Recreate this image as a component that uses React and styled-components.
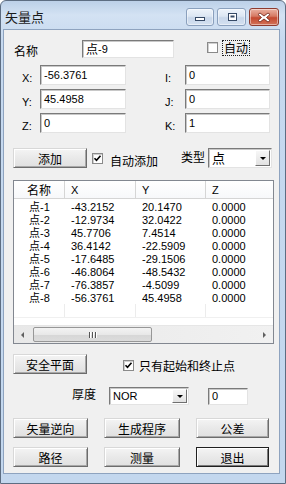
import React from 'react';
import styled, { createGlobalStyle } from 'styled-components';

const cjk = `"Noto Sans CJK SC", "Noto Sans", sans-serif`;
const latin = `"Liberation Sans", "Noto Sans CJK SC", sans-serif`;

const GlobalStyle = createGlobalStyle`
  html, body {
    margin: 0;
    padding: 0;
    background: #ffffff;
  }
  body {
    width: 286px;
    height: 484px;
    overflow: hidden;
  }
`;

const Window = styled.div`
  box-sizing: border-box;
  width: 286px;
  height: 484px;
  border: 1px solid #5d6d82;
  border-radius: 6px 6px 0 0;
  background: linear-gradient(#bcd0e8, #d3e2f3 14px, #c6d9ef 40px, #c3d7ee);
  padding: 0 5px 9px 2px;
  display: flex;
  flex-direction: column;
  font-family: ${cjk};
  font-size: 12px;
  color: #000;
`;

const TitleBar = styled.div`
  height: 28px;
  display: flex;
  align-items: flex-start;
`;

const Title = styled.span`
  margin: 8px 0 0 2px;
  font-size: 13px;
  line-height: 16px;
  color: #1b1b1b;
`;

const Captions = styled.div`
  margin: 7px 1px 0 auto;
  display: flex;
  gap: 3px;
`;

const CaptionButton = styled.div`
  box-sizing: border-box;
  width: ${(p) => p.$w}px;
  height: 18px;
  border: 1px solid ${(p) => (p.$close ? '#8e3b2f' : '#8aa0bd')};
  border-radius: 3px;
  background: ${(p) =>
    p.$close
      ? 'linear-gradient(#eab1a2, #d67a63 45%, #c4492f 55%, #d2735a)'
      : 'linear-gradient(#eef4fb, #dce7f3 45%, #c8d7ea 55%, #d4e1f1)'};
  box-shadow: inset 0 0 0 1px rgba(255, 255, 255, 0.45);
  display: flex;
  align-items: center;
  justify-content: center;
`;

const Client = styled.div`
  flex: 1;
  background: #f0f0f0;
  border: 1px solid #8ea3bf;
  display: flex;
  flex-direction: column;
`;

const Row = styled.div`
  display: flex;
  align-items: center;
  height: ${(p) => p.$h}px;
  margin-top: ${(p) => p.$mt}px;
  padding-left: ${(p) => p.$pl}px;
`;

const Label = styled.span`
  width: ${(p) => p.$w}px;
  margin-left: ${(p) => p.$ml || 0}px;
  align-self: ${(p) => (p.$low ? 'flex-end' : 'center')};
  line-height: 14px;
  margin-top: ${(p) => p.$mt || 0}px;
  font-family: ${(p) => (p.$latin ? latin : cjk)};
  font-size: ${(p) => (p.$latin ? 11 : 12)}px;
  white-space: nowrap;
`;

const Field = styled.div`
  box-sizing: border-box;
  width: ${(p) => p.$w}px;
  height: ${(p) => p.$h}px;
  margin-left: ${(p) => p.$ml || 0}px;
  background: #ffffff;
  border: 1px solid;
  border-color: #7a7a7a #e3e3e3 #e3e3e3 #7a7a7a;
  box-shadow: inset 1px 1px 0 #c8c8c8;
  padding-left: 3px;
  display: flex;
  align-items: center;
  font-family: ${latin};
  font-size: 11px;
  line-height: 13px;
  white-space: nowrap;
`;

const Han = styled.span`
  font-family: ${cjk};
  font-size: 12px;
  line-height: 1;
`;

const Select = styled(Field)`
  padding-left: 3px;
  padding-right: 1px;
  justify-content: space-between;
  font-size: ${(p) => (p.$cjk ? 13 : 11)}px;
`;

const DropButton = styled.div`
  box-sizing: border-box;
  width: 15px;
  height: calc(100% - 2px);
  background: linear-gradient(#f7f7f7, #e2e2e2);
  border: 1px solid;
  border-color: #ffffff #6f6f6f #6f6f6f #ffffff;
  display: flex;
  align-items: center;
  justify-content: center;
`;

const Arrow = styled.span`
  width: 0;
  height: 0;
  border-left: 3px solid transparent;
  border-right: 3px solid transparent;
  border-top: 3px solid #000;
`;

const CheckBox = styled.span`
  box-sizing: border-box;
  width: 11px;
  height: 11px;
  margin-left: ${(p) => p.$ml || 0}px;
  margin-top: ${(p) => p.$mt || 0}px;
  background: #ffffff;
  border: 1px solid #8a8a8a;
  box-shadow: inset 1px 1px 0 #d0d0d0;
  display: flex;
  align-items: center;
  justify-content: center;
  flex-shrink: 0;
`;

const CheckText = styled.span`
  margin-left: ${(p) => p.$ml}px;
  margin-top: ${(p) => p.$mt || 0}px;
  line-height: 14px;
  outline: ${(p) => (p.$focus ? '1px dotted #202020' : 'none')};
  padding: 0 1px;
  white-space: nowrap;
`;

const Button = styled.div`
  box-sizing: border-box;
  width: ${(p) => p.$w}px;
  height: 20px;
  margin-left: ${(p) => p.$ml || 0}px;
  background: linear-gradient(#f4f4f4, #e9e9e9 50%, #e0e0e0);
  border: 1px solid;
  border-color: ${(p) =>
    p.$default ? '#202020' : '#d8d8d8 #6c6c6c #6c6c6c #d8d8d8'};
  box-shadow: ${(p) =>
    p.$default
      ? 'inset 1px 1px 0 #ffffff, inset -1px -1px 0 #7a7a7a'
      : 'inset 1px 1px 0 #ffffff, inset -1px -1px 0 #a8a8a8'};
  display: flex;
  align-items: center;
  justify-content: center;
  font-size: 12px;
  white-space: nowrap;
`;

const List = styled.div`
  box-sizing: border-box;
  width: 261px;
  height: 164px;
  margin: 12px 0 0 9px;
  border: 1px solid #828790;
  background: #ffffff;
  display: flex;
  flex-direction: column;
  overflow: hidden;
`;

const Header = styled.div`
  box-sizing: border-box;
  height: 18px;
  display: flex;
  border-bottom: 1px solid #d5d5d5;
  background: linear-gradient(#ffffff, #f7f8fa);
  flex-shrink: 0;
`;

const HeadCell = styled.div`
  box-sizing: border-box;
  width: ${(p) => p.$w}px;
  flex-shrink: 0;
  border-right: 1px solid #d5d5d5;
  display: flex;
  align-items: center;
  justify-content: ${(p) => (p.$center ? 'center' : 'flex-start')};
  padding-left: ${(p) => (p.$center ? 0 : 6)}px;
  font-family: ${(p) => (p.$center ? cjk : latin)};
  font-size: ${(p) => (p.$center ? 12 : 11)}px;
`;

const Body = styled.div`
  padding-top: 1px;
  display: flex;
  flex-direction: column;
`;

const DataRow = styled.div`
  height: 13px;
  display: flex;
  flex-shrink: 0;
`;

const Cell = styled.div`
  width: ${(p) => p.$w}px;
  height: 13px;
  flex-shrink: 0;
  display: flex;
  align-items: center;
  justify-content: ${(p) => (p.$center ? 'center' : 'flex-start')};
  padding-left: ${(p) => (p.$center ? 0 : 6)}px;
  box-sizing: border-box;
  font-family: ${latin};
  font-size: 11px;
  line-height: 12px;
  white-space: nowrap;
`;

const Filler = styled.div`
  flex: 1;
  display: flex;
  flex-direction: column;
`;

const EmptyRow = styled.div`
  height: 13px;
  display: flex;
  flex-shrink: 0;
  border-bottom: 1px solid #f0f0f0;
`;

const FillCell = styled.div`
  box-sizing: border-box;
  width: ${(p) => p.$w}px;
  flex-shrink: 0;
  border-right: 1px solid #ececec;
`;

const ScrollBar = styled.div`
  height: 17px;
  display: flex;
  align-items: center;
  background: linear-gradient(90deg, #e8e8e8, #f1f1f1);
  border-top: 1px solid #e6e6e6;
  flex-shrink: 0;
`;

const ScrollArrow = styled.div`
  width: 17px;
  height: 17px;
  display: flex;
  align-items: center;
  justify-content: center;
  margin-left: ${(p) => (p.$right ? 'auto' : 0)};
`;

const Triangle = styled.span`
  width: 0;
  height: 0;
  border-top: 3px solid transparent;
  border-bottom: 3px solid transparent;
  ${(p) => (p.$right ? 'border-left: 3px solid #606060;' : 'border-right: 3px solid #606060;')}
`;

const Thumb = styled.div`
  box-sizing: border-box;
  width: 119px;
  height: 15px;
  margin-left: 2px;
  border: 1px solid #979797;
  border-radius: 2px;
  background: linear-gradient(#f3f3f3, #e8e8e8 50%, #d6d6d6 51%, #dcdcdc);
  display: flex;
  align-items: center;
  justify-content: center;
  gap: 2px;
`;

const Grip = styled.span`
  width: 1px;
  height: 6px;
  background: #555;
  box-shadow: 1px 0 0 #ffffff;
`;

const Check = () => (
  <svg width="9" height="9" viewBox="0 0 9 9">
    <path d="M1.5 4.2 L3.5 6.3 L7.5 1.8" fill="none" stroke="#000" strokeWidth="1.6" />
  </svg>
);

const columns = [51, 71, 70, 70];

const points = [
  ['点-1', '-43.2152', '20.1470', '0.0000'],
  ['点-2', '-12.9734', '32.0422', '0.0000'],
  ['点-3', '45.7706', '7.4514', '0.0000'],
  ['点-4', '36.4142', '-22.5909', '0.0000'],
  ['点-5', '-17.6485', '-29.1506', '0.0000'],
  ['点-6', '-46.8064', '-48.5432', '0.0000'],
  ['点-7', '-76.3857', '-4.5099', '0.0000'],
  ['点-8', '-56.3761', '45.4958', '0.0000'],
];

const coords = [
  ['X:', '-56.3761', 'I:', '0'],
  ['Y:', '45.4958', 'J:', '0'],
  ['Z:', '0', 'K:', '1'],
];

const App = () => {
  return (
    <>
      <GlobalStyle />
      <Window>
        <TitleBar>
          <Title>矢量点</Title>
          <Captions>
            <CaptionButton $w={28}>
              <svg width="12" height="10" viewBox="0 0 12 10">
                <rect x="1.5" y="5.5" width="9" height="3" fill="#fff" stroke="#364a66" />
              </svg>
            </CaptionButton>
            <CaptionButton $w={29}>
              <svg width="12" height="10" viewBox="0 0 12 10">
                <rect x="2.5" y="1.5" width="8" height="7" fill="#fff" stroke="#364a66" />
                <rect x="4.5" y="3.5" width="4" height="2" fill="#364a66" />
              </svg>
            </CaptionButton>
            <CaptionButton $w={30} $close>
              <svg width="14" height="11" viewBox="0 0 14 11">
                <path
                  d="M3 1 L7 4 L11 1 L13 2.5 L9.5 5.5 L13 8.5 L11 10 L7 7 L3 10 L1 8.5 L4.5 5.5 L1 2.5 Z"
                  fill="#fff"
                  stroke="#6b1f14"
                  strokeWidth="0.8"
                />
              </svg>
            </CaptionButton>
          </Captions>
        </TitleBar>

        <Client>
          <Row $h={18} $mt={10} $pl={10}>
            <Label $w={68} $low>名称</Label>
            <Field $w={92} $h={18}><Han>点</Han>-9</Field>
            <CheckBox $ml={33} $mt={-3} />
            <CheckText $ml={5} $mt={-2} $focus>自动</CheckText>
          </Row>

          {coords.map(([a, av, b, bv], i) => (
            <Row key={a} $h={20} $mt={i === 0 ? 7 : 4} $pl={18}>
              <Label $w={18} $low $latin>{a}</Label>
              <Field $w={86} $h={20}>{av}</Field>
              <Label $w={20} $ml={39} $low $latin>{b}</Label>
              <Field $w={85} $h={20}>{bv}</Field>
            </Row>
          ))}

          <Row $h={20} $mt={15} $pl={9}>
            <Button $w={74}>添加</Button>
            <CheckBox $ml={5}>
              <Check />
            </CheckBox>
            <CheckText $ml={6} $mt={5}>自动添加</CheckText>
            <Label $w={26} $ml={22} $mt={-2}>类型</Label>
            <Select $w={64} $h={20} $ml={1} $cjk>
              点
              <DropButton>
                <Arrow />
              </DropButton>
            </Select>
          </Row>

          <List>
            <Header>
              <HeadCell $w={columns[0]} $center>名称</HeadCell>
              <HeadCell $w={columns[1]}>X</HeadCell>
              <HeadCell $w={columns[2]}>Y</HeadCell>
              <HeadCell $w={columns[3]}>Z</HeadCell>
            </Header>
            <Body>
              {points.map((p) => (
                <DataRow key={p[0]}>
                  <Cell $w={columns[0]} $center>{p[0]}</Cell>
                  <Cell $w={columns[1]}>{p[1]}</Cell>
                  <Cell $w={columns[2]}>{p[2]}</Cell>
                  <Cell $w={columns[3]}>{p[3]}</Cell>
                </DataRow>
              ))}
            </Body>
            <Filler>
              <EmptyRow>
                {columns.map((w, i) => (
                  <FillCell key={i} $w={w} />
                ))}
              </EmptyRow>
            </Filler>
            <ScrollBar>
              <ScrollArrow>
                <Triangle />
              </ScrollArrow>
              <Thumb>
                <Grip />
                <Grip />
                <Grip />
              </Thumb>
              <ScrollArrow $right>
                <Triangle $right />
              </ScrollArrow>
            </ScrollBar>
          </List>

          <Row $h={20} $mt={10} $pl={9}>
            <Button $w={74}>安全平面</Button>
            <CheckBox $ml={36} $mt={3}>
              <Check />
            </CheckBox>
            <CheckText $ml={4} $mt={4}>只有起始和终止点</CheckText>
          </Row>

          <Row $h={18} $mt={13} $pl={68}>
            <Label $w={24} $mt={-4}>厚度</Label>
            <Select $w={80} $h={18} $ml={13}>
              NOR
              <DropButton>
                <Arrow />
              </DropButton>
            </Select>
            <Field $w={40} $h={17} $ml={19}>0</Field>
          </Row>

          <Row $h={20} $mt={13} $pl={9}>
            <Button $w={75}>矢量逆向</Button>
            <Button $w={76} $ml={16}>生成程序</Button>
            <Button $w={73} $ml={16}>公差</Button>
          </Row>

          <Row $h={20} $mt={9} $pl={9}>
            <Button $w={75}>路径</Button>
            <Button $w={76} $ml={16}>测量</Button>
            <Button $w={73} $ml={16} $default>退出</Button>
          </Row>
        </Client>
      </Window>
    </>
  );
};

export default App;
